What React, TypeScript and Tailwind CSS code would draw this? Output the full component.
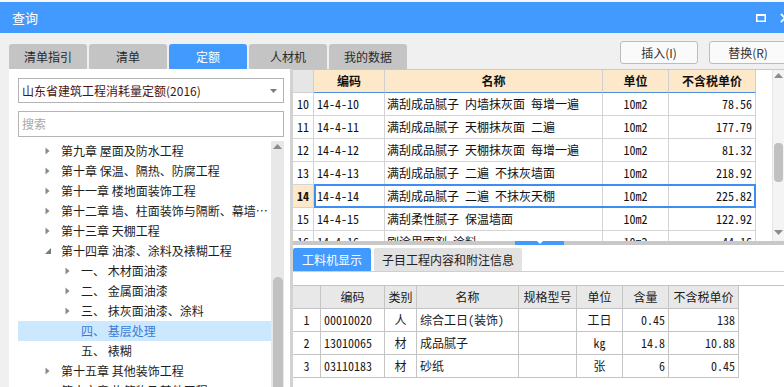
import React from "react";

const SANS = "font-['Noto_Sans_CJK_SC','Microsoft_YaHei',sans-serif]";
const MONO = "font-['Noto_Sans_Mono_CJK_SC','Noto_Sans_CJK_SC','Liberation_Mono',monospace]";

type TreeItem = { text: string; level: 0 | 1; state: "closed" | "open" | "leaf"; selected?: boolean };

const tree: TreeItem[] = [
  { text: "第九章 屋面及防水工程", level: 0, state: "closed" },
  { text: "第十章 保温、隔热、防腐工程", level: 0, state: "closed" },
  { text: "第十一章 楼地面装饰工程", level: 0, state: "closed" },
  { text: "第十二章 墙、柱面装饰与隔断、幕墙工程", level: 0, state: "closed" },
  { text: "第十三章 天棚工程", level: 0, state: "closed" },
  { text: "第十四章 油漆、涂料及裱糊工程", level: 0, state: "open" },
  { text: "一、 木材面油漆", level: 1, state: "closed" },
  { text: "二、 金属面油漆", level: 1, state: "closed" },
  { text: "三、 抹灰面油漆、涂料", level: 1, state: "closed" },
  { text: "四、 基层处理", level: 1, state: "leaf", selected: true },
  { text: "五、 裱糊", level: 1, state: "leaf" },
  { text: "第十五章 其他装饰工程", level: 0, state: "closed" },
  { text: "第十六章 构筑物及其他工程", level: 0, state: "closed" },
];

const quotaRows = [
  ["10", "14-4-10", "满刮成品腻子 内墙抹灰面 每增一遍", "10m2", "78.56"],
  ["11", "14-4-11", "满刮成品腻子 天棚抹灰面 二遍", "10m2", "177.79"],
  ["12", "14-4-12", "满刮成品腻子 天棚抹灰面 每增一遍", "10m2", "81.32"],
  ["13", "14-4-13", "满刮成品腻子 二遍 不抹灰墙面", "10m2", "218.92"],
  ["14", "14-4-14", "满刮成品腻子 二遍 不抹灰天棚", "10m2", "225.82"],
  ["15", "14-4-15", "满刮柔性腻子 保温墙面", "10m2", "122.92"],
  ["16", "14-4-16", "刷涂界面剂 涂料", "10m2", "44.16"],
];

const resourceRows = [
  ["1", "00010020", "人", "综合工日(装饰)", "", "工日", "0.45", "138"],
  ["2", "13010065", "材", "成品腻子", "", "kg", "14.8", "10.88"],
  ["3", "03110183", "材", "砂纸", "", "张", "6", "0.45"],
];

function Arrow({ state }: { state: TreeItem["state"] }) {
  if (state === "leaf") return <span className="w-[16px] shrink-0" />;
  if (state === "open")
    return (
      <span className="w-[16px] shrink-0 flex items-center">
        <svg width="6" height="6" viewBox="0 0 6 6">
          <path d="M6 0 L6 6 L0 6 Z" fill="#7a7a7a" />
        </svg>
      </span>
    );
  return (
    <span className="w-[16px] shrink-0 flex items-center">
      <svg width="5" height="8" viewBox="0 0 5 8">
        <path d="M0.5 0.5 L4.5 4 L0.5 7.5 Z" fill="#8a8a8a" />
      </svg>
    </span>
  );
}

function TopTab({ label, active }: { label: string; active?: boolean }) {
  return (
    <div
      className={
        "w-[78px] h-[25px] rounded-t-[3px] flex items-center justify-center text-[12px] " +
        (active ? "bg-[#4299fe] text-white" : "bg-[#c4c4c4] text-[#2a2a2a]")
      }
    >
      {label}
    </div>
  );
}

function ScrollArrow({ up }: { up?: boolean }) {
  return (
    <svg width="9" height="5" viewBox="0 0 9 5">
      <path d={up ? "M0 5 L4.5 0 L9 5 Z" : "M0 0 L9 0 L4.5 5 Z"} fill="#8c8c8c" />
    </svg>
  );
}

export default function App() {
  const topCols = ["w-[21px]", "w-[71px]", "w-[218px]", "w-[66px]", "w-[87px]"];
  const botCols = ["w-[28px]", "w-[64px]", "w-[32px]", "w-[102px]", "w-[58px]", "w-[46px]", "w-[46px]", "w-[70px]"];
  const botAlign = ["justify-center", "justify-start pl-[3px]", "justify-center", "justify-start pl-[3px]", "justify-center", "justify-center", "justify-end pr-[3px]", "justify-end pr-[3px]"];

  return (
    <div className={"w-[784px] h-[387px] overflow-hidden bg-[#f0f0f0] flex flex-col " + SANS}>
      {/* strip of the window behind */}
      <div className="h-[2px] bg-[#f7f7f7] shrink-0" />

      {/* title bar */}
      <div className="h-[31px] shrink-0 bg-[#4299fe] flex items-center pl-[12px] text-white text-[13px]">
        <span>查询</span>
        <div className="ml-auto flex items-center gap-[14px] mr-[-6px]">
          <svg width="10" height="8" viewBox="0 0 10 8">
            <rect x="0.75" y="1" width="8.5" height="6.25" fill="none" stroke="white" strokeWidth="1.5" />
            <rect x="0" y="0" width="10" height="2" fill="white" />
          </svg>
          <svg width="10" height="10" viewBox="0 0 10 10">
            <path d="M1 1 L9 9 M9 1 L1 9" stroke="white" strokeWidth="1.8" />
          </svg>
        </div>
      </div>

      {/* tab row */}
      <div className="h-[36px] shrink-0 flex pl-[9px]">
        <div className="flex items-end gap-[2px]">
          <TopTab label="清单指引" />
          <TopTab label="清单" />
          <TopTab label="定额" active />
          <TopTab label="人材机" />
          <TopTab label="我的数据" />
        </div>
        <div className="ml-auto mr-[-3px] mt-[8px] flex gap-[11px]">
          <button className="w-[78px] h-[23px] bg-[#fafafa] border border-[#bcbcbc] rounded-[3px] text-[12px] text-[#333]">
            插入(I)
          </button>
          <button className="w-[78px] h-[23px] bg-[#fafafa] border border-[#bcbcbc] rounded-[3px] text-[12px] text-[#333]">
            替换(R)
          </button>
        </div>
      </div>

      {/* main area */}
      <div className="flex-1 flex min-h-0">
        {/* left panel */}
        <div className="ml-[9px] w-[281px] shrink-0 bg-white flex flex-col min-h-0">
          <div className="mt-[9px] ml-[9px] w-[266px] h-[25px] border border-[#b4b4b4] flex items-center pl-[3px] pr-[6px]">
            <span className="text-[12px] text-[#4a1414]">山东省建筑工程消耗量定额(2016)</span>
            <svg className="ml-auto" width="7" height="4" viewBox="0 0 7 4">
              <path d="M0 0 L7 0 L3.5 4 Z" fill="#7a7a7a" />
            </svg>
          </div>
          <div className="mt-[8px] ml-[9px] w-[266px] h-[26px] border border-[#b4b4b4] flex items-center pl-[3px]">
            <span className="text-[12px] text-[#a8a8a8]">搜索</span>
          </div>
          <div className="mt-[4px] flex flex-1 min-h-0">
            <div className="ml-[9px] w-[253px] overflow-hidden">
              {tree.map((item) => (
                <div
                  key={item.text}
                  className={
                    "h-[20px] flex items-center text-[12px] " +
                    (item.selected ? "bg-[#cce8ff] text-[#3a7bd5]" : "text-[#1e1e1e]")
                  }
                >
                  <span className={item.level === 0 ? "w-[27px] shrink-0" : "w-[47px] shrink-0"} />
                  <Arrow state={item.state} />
                  <span className="w-[209px] overflow-hidden text-ellipsis whitespace-nowrap">{item.text}</span>
                </div>
              ))}
            </div>
            <div className="w-[13px] bg-[#e8e8e8] flex flex-col items-center pt-[3px]">
              <ScrollArrow up />
              <div className="mt-[128px] w-[10px] flex-1 bg-[#c1c1c1] rounded-t-[5px]" />
            </div>
          </div>
        </div>

        {/* right panel */}
        <div className="w-[494px] shrink-0 border-l-[3px] border-[#d2d2d2] flex flex-col min-h-0">
          {/* quota grid */}
          <div className="h-[172px] shrink-0 flex bg-white border-t border-[#c8c8c8]">
            <div className={"flex-1 overflow-hidden text-[12px] text-[#111] " + MONO}>
              <div className="h-[23px] flex font-bold">
                <div className={topCols[0] + " bg-[#e6e6e6] border-r border-b border-[#cfcfcf]"} />
                {["编码", "名称", "单位", "不含税单价"].map((h, i) => (
                  <div
                    key={h}
                    className={topCols[i + 1] + " bg-[#fde8c9] border-r border-[#cfcfcf] border-b border-b-[#4a8fe0] flex items-center justify-center " + SANS}
                  >
                    {h}
                  </div>
                ))}
              </div>
              {quotaRows.map((r) => {
                const sel = r[0] === "14";
                return (
                  <div key={r[0]} className="h-[23px] flex">
                    <div
                      className={
                        topCols[0] +
                        " border-r border-b border-[#d4d4d4] flex items-center justify-center " +
                        (sel ? "bg-[#fde8c9] font-bold" : "")
                      }
                    >
                      {r[0]}
                    </div>
                    <div className="relative flex">
                      <div className={topCols[1] + " border-r border-b border-[#d4d4d4] flex items-center pl-[3px]"}>{r[1]}</div>
                      <div className={topCols[2] + " border-r border-b border-[#d4d4d4] flex items-center pl-[2px] whitespace-nowrap"}>{r[2]}</div>
                      <div className={topCols[3] + " border-r border-b border-[#d4d4d4] flex items-center justify-center"}>{r[3]}</div>
                      <div className={topCols[4] + " border-r border-b border-[#d4d4d4] flex items-center justify-end pr-[3px]"}>{r[4]}</div>
                      {sel && <div className="absolute left-0 right-0 top-[-1px] bottom-0 border-2 border-[#3d8ef2]" />}
                    </div>
                  </div>
                );
              })}
            </div>
            <div className="w-[12px] bg-[#f4f4f4] flex flex-col items-center pt-[3px] pb-[6px] border-l border-[#e4e4e4]">
              <ScrollArrow up />
              <div className="mt-[65px] w-[9px] h-[39px] bg-[#c1c1c1] rounded-[4px]" />
              <div className="mt-auto">
                <ScrollArrow />
              </div>
            </div>
          </div>

          {/* splitter */}
          <div className="h-[4px] shrink-0 bg-[#c8c8c8] flex justify-start">
            <div className="ml-[222px] w-[49px] h-[4px] bg-[#4299fe] flex justify-center">
              <svg width="6" height="3" viewBox="0 0 6 3">
                <path d="M0 0 L6 0 L3 3 Z" fill="white" />
              </svg>
            </div>
          </div>

          {/* detail panel */}
          <div className="flex-1 bg-white flex flex-col min-h-0">
            <div className="mt-[3px] h-[24px] shrink-0 flex gap-[3px] border-b border-[#cfcfcf] text-[12px]">
              <div className="w-[78px] rounded-t-[2px] bg-[#4299fe] text-white flex items-center justify-center">工料机显示</div>
              <div className="w-[148px] rounded-t-[2px] bg-[#e2e2e2] text-[#222] flex items-center justify-center">
                子目工程内容和附注信息
              </div>
            </div>
            <div className={"mt-[13px] text-[12px] text-[#1a1a1a] " + MONO}>
              <div className="h-[24px] flex border-t border-[#c4c4c4]">
                {["", "编码", "类别", "名称", "规格型号", "单位", "含量", "不含税单价"].map((h, i) => (
                  <div
                    key={i}
                    className={botCols[i] + " bg-[#e8e8e8] border-r border-b border-[#c4c4c4] flex items-center justify-center " + SANS}
                  >
                    {h}
                  </div>
                ))}
              </div>
              {resourceRows.map((r) => (
                <div key={r[0]} className="h-[23px] flex">
                  {r.map((c, i) => (
                    <div
                      key={i}
                      className={botCols[i] + " border-r border-b border-[#c4c4c4] flex items-center whitespace-nowrap " + botAlign[i]}
                    >
                      {c}
                    </div>
                  ))}
                </div>
              ))}
            </div>
          </div>
        </div>
      </div>
    </div>
  );
}
